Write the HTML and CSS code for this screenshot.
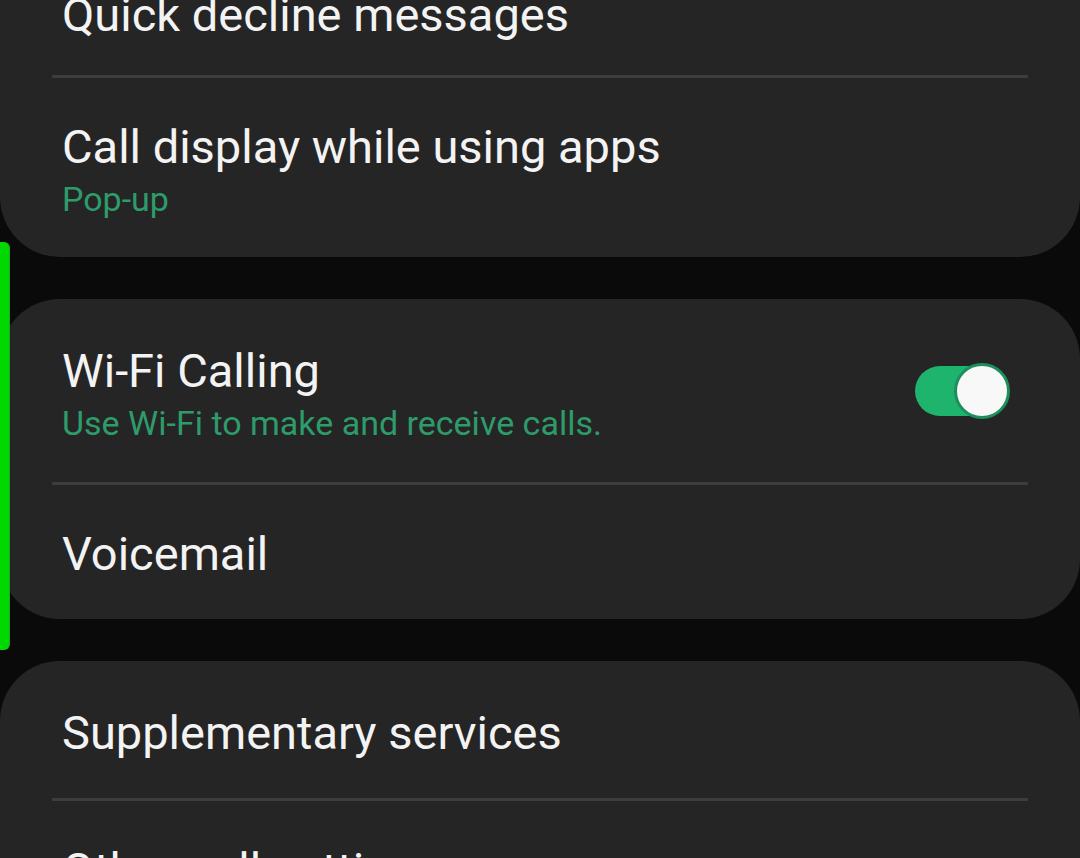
FILE: index.html
```html
<!DOCTYPE html>
<html lang="en">
<head>
    <meta charset="UTF-8">
    <meta name="viewport" content="width=device-width, initial-scale=1.0">
    <title>Call settings</title>
    <link rel="stylesheet" href="styles.css">
</head>
<body>
    <div class="page">
        <div class="card first">
            <div class="row tight">
                <div class="title">Quick decline messages</div>
            </div>
            <div class="divider"></div>
            <div class="row two">
                <div class="title">Call display while using apps</div>
                <div class="sub">Pop-up</div>
            </div>
        </div>

        <div class="card">
            <div class="row two switch-row">
                <div class="text">
                    <div class="title">Wi-Fi Calling</div>
                    <div class="sub">Use Wi-Fi to make and receive calls.</div>
                </div>
                <div class="switch on"><span class="knob"></span></div>
            </div>
            <div class="divider"></div>
            <div class="row">
                <div class="title">Voicemail</div>
            </div>
        </div>

        <div class="card">
            <div class="row">
                <div class="title">Supplementary services</div>
            </div>
            <div class="divider"></div>
            <div class="row">
                <div class="title">Other call settings</div>
            </div>
        </div>
    </div>
    <!-- edge panel handle -->
    <div class="edge-handle"></div>
</body>
</html>
```

FILE: styles.css
```css
* {
    margin: 0;
    padding: 0;
    box-sizing: border-box;
}
html, body {
    width: 1080px;
    height: 858px;
    overflow: hidden;
    background-color: #0a0a0a;
}
body {
    position: relative;
    font-family: Roboto, "Noto Sans", "Liberation Sans", sans-serif;
    color: #f3f3f3;
}
.page {
    display: flex;
    flex-direction: column;
    gap: 42px;
    margin-top: -57px;
}
.card {
    background-color: #252525;
    border-radius: 60px;
    padding-top: 3px;
}
.row {
    padding: 41px 73px 37px 62px;
}
.row.tight {
    padding-bottom: 32px;
}
.row.two {
    padding-bottom: 34px;
}
.row.switch-row {
    padding-bottom: 35px;
}
.title {
    font-size: 47px;
    line-height: 56px;
    white-space: nowrap;
}
.sub {
    font-size: 34px;
    line-height: 48px;
    color: #2e9b6a;
    white-space: nowrap;
}
.divider {
    height: 3px;
    margin: 0 52px;
    background-color: #3d3d3d;
}
.switch-row {
    display: flex;
    align-items: center;
    justify-content: space-between;
}
.switch {
    position: relative;
    width: 92px;
    height: 50px;
    margin-bottom: 8px;
    border-radius: 25px;
    background-color: #1fb46d;
}
.switch .knob {
    position: absolute;
    right: -3px;
    top: -3px;
    width: 56px;
    height: 56px;
    border-radius: 50%;
    background-color: #f8f8f8;
    border: 3px solid #1c8f5c;
}
.edge-handle {
    position: absolute;
    left: 0;
    top: 242px;
    width: 10px;
    height: 408px;
    background-color: #00d900;
    border-right: 1px solid #1fa81f;
    border-radius: 0 6px 6px 0;
}
```
